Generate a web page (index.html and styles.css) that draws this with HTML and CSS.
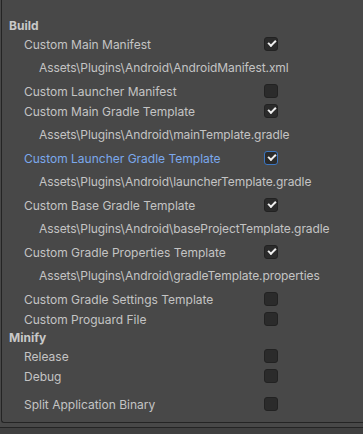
FILE: index.html
```html
<!DOCTYPE html>
<html>
<head>
<meta charset="utf-8">
<link rel="stylesheet" href="styles.css">
</head>
<body>
<div class="panel">
  <div class="header">Build</div>
  <div class="row"><span class="label">Custom Main Manifest</span><span class="cb on"></span></div>
  <div class="path">Assets\Plugins\Android\AndroidManifest.xml</div>
  <div class="row"><span class="label">Custom Launcher Manifest</span><span class="cb"></span></div>
  <div class="row"><span class="label">Custom Main Gradle Template</span><span class="cb on"></span></div>
  <div class="path">Assets\Plugins\Android\mainTemplate.gradle</div>
  <div class="row focus"><span class="label">Custom Launcher Gradle Template</span><span class="cb on"></span></div>
  <div class="path">Assets\Plugins\Android\launcherTemplate.gradle</div>
  <div class="row"><span class="label">Custom Base Gradle Template</span><span class="cb on"></span></div>
  <div class="path">Assets\Plugins\Android\baseProjectTemplate.gradle</div>
  <div class="row"><span class="label">Custom Gradle Properties Template</span><span class="cb on"></span></div>
  <div class="path">Assets\Plugins\Android\gradleTemplate.properties</div>
  <div class="row"><span class="label">Custom Gradle Settings Template</span><span class="cb"></span></div>
  <div class="row"><span class="label">Custom Proguard File</span><span class="cb"></span></div>
  <div class="header short">Minify</div>
  <div class="row"><span class="label">Release</span><span class="cb"></span></div>
  <div class="row"><span class="label">Debug</span><span class="cb"></span></div>
  <div class="row spaced"><span class="label">Split Application Binary</span><span class="cb"></span></div>
</div>
<div class="divider"></div>
<div class="footer"></div>
</body>
</html>
```
FILE: styles.css
```css
html, body {
  margin: 0;
  padding: 0;
  background: #484848;
}
body {
  width: 363px;
  height: 434px;
  overflow: hidden;
  font-family: Inter, "Noto Sans", sans-serif;
  font-size: 12px;
  color: #c4c4c4;
}
.panel {
  margin-left: 1px;
  border-left: 1px solid #242424;
  border-bottom: 1px solid #242424;
  border-bottom-left-radius: 3px;
  padding-top: 16px;
  padding-bottom: 8px;
  display: flex;
  flex-direction: column;
}
.header {
  height: 18px;
  display: flex;
  align-items: center;
  padding-left: 7px;
  font-weight: 700;
  color: #c8c8c8;
}
.header.short {
  height: 17px;
}
.row {
  height: 20px;
  display: flex;
  align-items: center;
  padding-left: 22px;
}
.row.spaced {
  margin-top: 8px;
}
.label {
  width: 240px;
  white-space: nowrap;
}
.row.focus .label {
  color: #7ba8ec;
}
.path {
  height: 27px;
  display: flex;
  align-items: center;
  padding-left: 37px;
  white-space: nowrap;
  letter-spacing: -0.08px;
}
.cb {
  width: 12px;
  height: 12px;
  border: 1px solid #222222;
  border-radius: 3px;
  background: #2b2b2b;
  position: relative;
  flex: none;
}
.row.focus .cb {
  border-color: #3c76c1;
}
.cb.on::after {
  content: "";
  position: absolute;
  left: 3px;
  top: 2px;
  width: 6px;
  height: 3px;
  border-left: 2px solid #f0f0f0;
  border-bottom: 2px solid #f0f0f0;
  transform: rotate(-45deg);
  transform-origin: center;
}
.divider {
  height: 4px;
  border-bottom: 1px solid #242424;
}
.footer {
  height: 10px;
  background: #404040;
}
```
